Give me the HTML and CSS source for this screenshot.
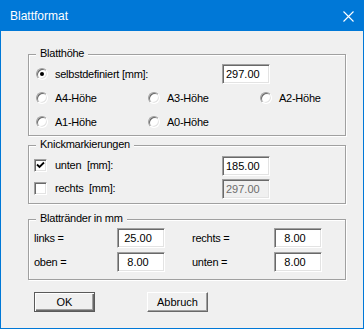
FILE: index.html
```html
<!doctype html>
<html lang="de">
<head>
    <meta charset="UTF-8">
    <title>Blattformat</title>
    <link rel="stylesheet" href="styles.css">
</head>
<body>
    <div class="window">
        <div class="titlebar">
            <span class="title">Blattformat</span>
            <svg class="close" width="11" height="11" viewBox="0 0 11 11">
                <path d="M0.5 0.5 L10.5 10.5 M10.5 0.5 L0.5 10.5" stroke="#fff" stroke-width="1.1" fill="none"/>
            </svg>
        </div>
        <div class="client">
            <div class="group height">
                <span class="caption">Blatthöhe</span>
                <div class="row first">
                    <label class="opt custom"><span class="radio checked"></span>selbstdefiniert [mm]:</label>
                    <input type="text" class="field" value="297.00">
                </div>
                <div class="grid3">
                    <label class="opt"><span class="radio"></span>A4-Höhe</label>
                    <label class="opt"><span class="radio"></span>A3-Höhe</label>
                    <label class="opt"><span class="radio"></span>A2-Höhe</label>
                    <label class="opt"><span class="radio"></span>A1-Höhe</label>
                    <label class="opt"><span class="radio"></span>A0-Höhe</label>
                </div>
            </div>

            <div class="group folds">
                <span class="caption">Knickmarkierungen</span>
                <div class="row">
                    <label class="opt check"><span class="box"><svg width="9" height="9" viewBox="0 0 9 9"><path d="M1 3.5 L3.5 6 L8 1.5" stroke="#000" stroke-width="1.8" fill="none"/></svg></span>unten&nbsp; [mm]:</label>
                    <input type="text" class="field" value="185.00">
                </div>
                <div class="row">
                    <label class="opt check"><span class="box"></span>rechts&nbsp; [mm]:</label>
                    <input type="text" class="field" value="297.00" disabled>
                </div>
            </div>

            <div class="group margins">
                <span class="caption">Blattränder in mm</span>
                <div class="grid4">
                    <span class="lbl">links =</span>
                    <input type="text" class="field num" value="25.00">
                    <span class="lbl">rechts =</span>
                    <input type="text" class="field num" value="8.00">
                    <span class="lbl">oben =</span>
                    <input type="text" class="field num" value="8.00">
                    <span class="lbl">unten =</span>
                    <input type="text" class="field num" value="8.00">
                </div>
            </div>

            <div class="buttons">
                <button class="btn default">OK</button>
                <button class="btn">Abbruch</button>
            </div>
        </div>
    </div>
</body>
</html>
```

FILE: styles.css
```css
* {
    box-sizing: border-box;
    margin: 0;
    padding: 0;
}
body {
    font-family: 'Liberation Sans', Arial, sans-serif;
    font-size: 11px;
    color: #000;
    background: #f0f0f0;
    overflow: hidden;
}
.window {
    width: 364px;
    height: 329px;
    border: 1px solid #0078d7;
    background: #f0f0f0;
}
.titlebar {
    height: 30px;
    background: #0078d7;
    color: #fff;
    display: flex;
    align-items: center;
    padding-left: 9px;
}
.title {
    font-size: 12px;
    line-height: 30px;
}
.close {
    margin-left: auto;
    margin-right: 9px;
    margin-top: 0;
}
.client {
    padding: 23px 17px 0 27px;
}
.group {
    position: relative;
    border: 1px solid #a0a0a0;
    box-shadow: inset 1px 1px #fff, 1px 1px #fff;
}
.caption {
    position: absolute;
    top: -8px;
    left: 7px;
    padding: 0 4px;
    line-height: 13px;
    background: #f0f0f0;
    letter-spacing: -0.25px;
}
.height {
    padding: 7px 0 1px 7px;
}
.folds {
    margin-top: 9px;
    padding: 8px 0 3px 5px;
}
.margins {
    margin-top: 15px;
    padding: 6px 0 5px 5px;
}
.row {
    display: flex;
    align-items: center;
    height: 23px;
}
.row.first {
    height: 24px;
}
.opt {
    display: flex;
    align-items: center;
    line-height: 13px;
    letter-spacing: -0.25px;
    height: 24px;
}
.opt.custom {
    width: 186px;
}
.opt.check {
    width: 188px;
    height: 23px;
}
.grid3 {
    display: grid;
    grid-template-columns: 112px 112px 112px;
}
.radio {
    width: 12px;
    height: 12px;
    border-radius: 50%;
    border: 1px solid;
    border-color: #a0a0a0 #fff #fff #a0a0a0;
    box-shadow: inset 1px 1px #696969, inset -1px -1px #e3e3e3;
    background: #fff;
    margin-right: 7px;
    display: flex;
    align-items: center;
    justify-content: center;
}
.radio.checked::after {
    content: "";
    width: 4px;
    height: 4px;
    border-radius: 50%;
    background: #000;
}
.box {
    width: 13px;
    height: 13px;
    border: 1px solid;
    border-color: #a0a0a0 #fff #fff #a0a0a0;
    box-shadow: inset 1px 1px #696969, inset -1px -1px #e3e3e3;
    background: #fff;
    margin-right: 8px;
    display: flex;
    align-items: center;
    justify-content: center;
}
.field {
    width: 48px;
    height: 20px;
    font-family: inherit;
    font-size: 11px;
    color: #000;
    background: #fff;
    border: 1px solid;
    border-color: #a0a0a0 #fff #fff #a0a0a0;
    box-shadow: inset 1px 1px #696969, inset -1px -1px #e3e3e3;
    padding: 0 2px 0 3px;
    outline: none;
}
.field:disabled {
    background: #f0f0f0;
    color: #6d6d6d;
}
.field.num {
    text-align: center;
    padding: 0 8px 0 2px;
}
.grid4 {
    display: grid;
    grid-template-columns: 83px 75px 82px 48px;
    grid-auto-rows: 24px;
    align-items: center;
}
.lbl {
    letter-spacing: -0.25px;
    line-height: 13px;
}
.buttons {
    display: flex;
    gap: 52px;
    margin-top: 12px;
    padding-left: 6px;
}
.btn {
    width: 61px;
    height: 20px;
    font-family: inherit;
    font-size: 11px;
    color: #000;
    background: #f0f0f0;
    border: 1px solid;
    border-color: #fff #696969 #696969 #fff;
    box-shadow: inset -1px -1px #a0a0a0;
}
.btn.default {
    border-color: #5a5a5a;
    box-shadow: inset 1px 1px #fff, inset -1px -1px #696969, inset -2px -2px #a0a0a0;
}
```
